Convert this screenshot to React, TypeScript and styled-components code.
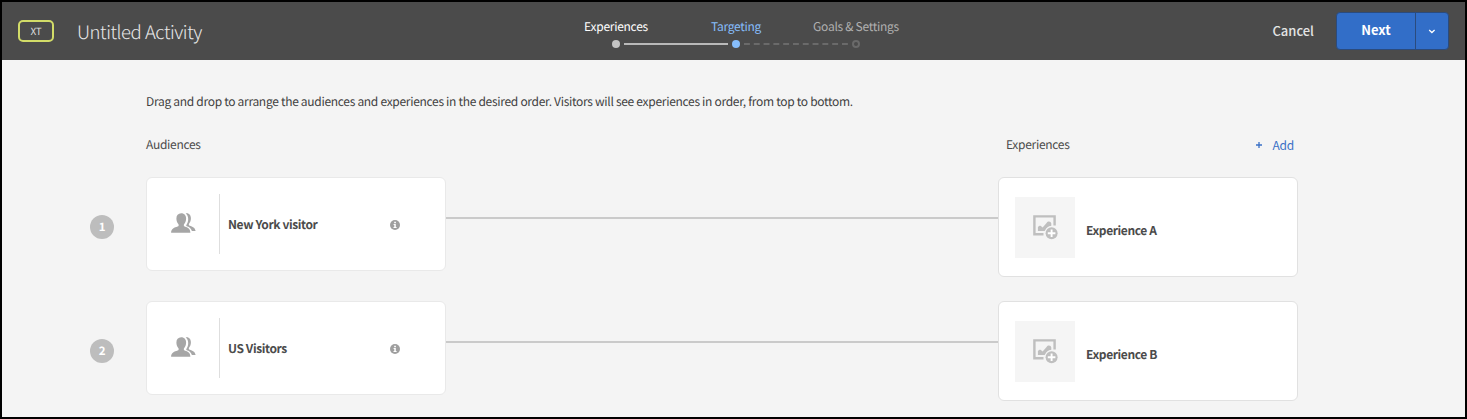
import React from "react";
import styled, { createGlobalStyle } from "styled-components";

const GlobalStyle = createGlobalStyle`
  *, *::before, *::after { box-sizing: border-box; }
  body {
    margin: 0;
    background: #f4f4f4;
    font-family: "Noto Sans CJK SC", "Noto Sans", sans-serif;
    color: #4b4b4b;
    font-size: 12px;
    line-height: 18px;
    letter-spacing: -0.3px;
    text-rendering: geometricPrecision;
  }
`;

const Frame = styled.div`
  width: 1467px;
  height: 419px;
  border: 2px solid #000;
  background: #f4f4f4;
  overflow: hidden;
`;

const Header = styled.header`
  display: flex;
  align-items: center;
  height: 58px;
  padding: 0 16px;
  background: #4b4b4b;
`;

const HeaderSide = styled.div<{ $end?: boolean }>`
  display: flex;
  align-items: center;
  justify-content: ${(p) => (p.$end ? "flex-end" : "flex-start")};
  width: ${(p) => (p.$end ? "auto" : "538px")};
  flex: ${(p) => (p.$end ? "1" : "none")};
`;

const TypeBadge = styled.span`
  width: 36px;
  height: 22px;
  border: 2px solid #d2dc68;
  border-radius: 5px;
  color: #dcdcdc;
  font-size: 10px;
  line-height: 17px;
  letter-spacing: -0.2px;
  text-align: center;
`;

const Title = styled.h1`
  margin: 1px 0 0 23px;
  color: #e8e8e8;
  font-size: 18.5px;
  font-weight: 300;
  line-height: 28px;
  letter-spacing: -0.45px;
  white-space: nowrap;
`;

const Steps = styled.ol`
  display: flex;
  margin: 4px 0 0;
  padding: 0;
  list-style: none;
`;

type StepState = "done" | "current" | "todo";
const labelColors = { done: "#ffffff", current: "#86bdfb", todo: "#b0b0b0" };
const dotColors = { done: "#c4c4c4", current: "#86bdfb", todo: "#4b4b4b" };

const Step = styled.li<{ $state: StepState }>`
  display: flex;
  flex-direction: column;
  align-items: center;
  width: 120px;
  color: ${(p) => labelColors[p.$state]};
  letter-spacing: -0.27px;
  white-space: nowrap;
`;

const StepTrack = styled.div`
  display: grid;
  grid-template-columns: 1fr 8px 1fr;
  align-items: center;
  column-gap: 4px;
  width: 100%;
  height: 8px;
  margin-top: 4px;
`;

const StepDot = styled.span<{ $state: StepState }>`
  height: 8px;
  border-radius: 50%;
  background: ${(p) => dotColors[p.$state]};
  border: ${(p) => (p.$state === "todo" ? "2px solid #6a6a6a" : "none")};
`;

const Segment = styled.span<{ $kind: "solid" | "dashed" | "none"; $side: "before" | "after" }>`
  height: 2px;
  background: ${(p) =>
    p.$kind === "solid"
      ? "#b9b9b9"
      : p.$kind === "dashed"
        ? "linear-gradient(90deg, #6a6a6a 0 6px, transparent 6px)"
        : "transparent"};
  background-size: 9.8px 2px;
  background-position-x: ${(p) => (p.$side === "before" ? "-3px" : "0")};
`;

const CancelButton = styled.button`
  margin: 0 22px 0 0;
  padding: 0 0 1px;
  border: 0;
  background: none;
  color: #e4e4e4;
  font: 500 13px/20px "Noto Sans CJK SC", "Noto Sans", sans-serif;
`;

const SplitButton = styled.div`
  display: flex;
  height: 38px;
  border: 1px solid #2b4b7d;
  border-radius: 4px;
  background: #326ec8;
  overflow: hidden;
`;

const NextButton = styled.button`
  width: 79px;
  padding: 0 0 2px;
  border: 0;
  border-right: 1px solid #2b4b7d;
  background: none;
  color: #fff;
  font: 700 13px/20px "Noto Sans CJK SC", "Noto Sans", sans-serif;
`;

const MoreButton = styled.button`
  display: flex;
  align-items: center;
  justify-content: center;
  width: 32px;
  padding: 1px 0 0;
  border: 0;
  background: none;
`;

const Main = styled.main`
  padding: 33px 0 0 88px;
`;

const Hint = styled.p`
  margin: 0 0 25px 56px;
  color: #3f3f3f;
`;

const Columns = styled.div`
  display: flex;
  justify-content: space-between;
  width: 1148px;
  margin: 0 0 23px 56px;
`;

const ExperienceHeading = styled.div`
  display: flex;
  justify-content: space-between;
  width: 288px;
`;

const AddLink = styled.button`
  display: flex;
  align-items: center;
  gap: 10px;
  height: 17px;
  padding: 0;
  border: 0;
  background: none;
  color: #3a70c6;
  font: inherit;
  letter-spacing: -0.2px;
`;

const Row = styled.div`
  display: flex;
  align-items: flex-start;
  height: 100px;
  margin-bottom: 24px;
`;

const Order = styled.span`
  width: 24px;
  height: 24px;
  margin: 38px 32px 0 0;
  border-radius: 50%;
  background: #bdbdbd;
  color: #fff;
  font-weight: 700;
  font-size: 11.5px;
  line-height: 24px;
  text-align: center;
`;

const Card = styled.div<{ $h: number; $edge: string }>`
  display: flex;
  width: 300px;
  height: ${(p) => p.$h}px;
  border: 1px solid ${(p) => p.$edge};
  border-radius: 6px;
  background: #fff;
`;

const AudienceIcon = styled.div`
  width: 73px;
  height: 60px;
  margin-top: 16px;
  padding: 19px 0 0 24px;
  border-right: 1px solid #dedede;
`;

const Name = styled.span<{ $w?: number; $top: number; $left: number }>`
  width: ${(p) => (p.$w ? `${p.$w}px` : "auto")};
  margin: ${(p) => `${p.$top}px 0 0 ${p.$left}px`};
  font-weight: 700;
  letter-spacing: -0.39px;
  white-space: nowrap;
`;

const InfoSlot = styled.span`
  display: flex;
  margin-top: 42px;
  height: 10px;
`;

const Connector = styled.div`
  width: 552px;
  height: 2px;
  margin-top: 40px;
  background: #cacaca;
`;

const Thumb = styled.div`
  width: 60px;
  height: 61px;
  margin: 19px 0 0 16px;
  padding: 18px 0 0 18px;
  background: #f5f5f5;
`;

const PeopleIcon = () => (
  <svg width="25" height="21" viewBox="0 0 25 21" fill="#a6a6a6" display="block">
    <path d="M10.2.3c3.100 0 4.900 2.100 4.900 5.100 0 2.600-.9 4.200-1.900 5.500-.7 1-.5 2.200.6 2.600 3.100 1.100 5.600 2.200 5.600 6.300H.1c0-4.200 3.300-5.200 6.500-6.300 1.200-.4 1.400-1.600.7-2.600-1-1.300-1.900-2.900-1.900-5.500 0-3 1.700-5.100 4.800-5.100z" />
    <path d="M14.700.4c3.400-.7 5.200 1.900 5.200 5 0 2.400-.9 3.800-1.700 5-.7.9-.4 2 .5 2.300 2.800 1 5.500 1.700 5.900 5.400h-3.700c-.8-3-3-4.100-5.100-4.800-.7-.3-.7-.9-.3-1.500 1-1.500 1.700-3.500 1.700-5.800 0-2.300-.9-4.600-2.500-5.600z" />
  </svg>
);

const InfoIcon = () => (
  <svg width="10" height="10" viewBox="0 0 10 10" display="block">
    <circle cx="5" cy="5" r="5" fill="#9f9f9f" />
    <path d="M4.200 1.700h1.700v1.500H4.200zM3.600 4.100h2.200v3h.8v1H3.500v-1h.8V5.100h-.7z" fill="#fff" />
  </svg>
);

const AddImageIcon = () => (
  <svg width="25" height="25" viewBox="0 0 25 25" display="block">
    <path d="M10.500 19.200H1.400V1.400h20.200v9.200" fill="none" stroke="#bfbfbf" strokeWidth="2.400" />
    <path d="M4.900 15.900v-3.700c.8-1.300 2-1.900 3-1.100l1.700 1.500 4-4.700c.6-.9 1.400-1.400 2.400-1.400 1.200 0 2.100.8 2.300 1.900v2.300c-3 .5-5.200 2.500-5.900 5.200z" fill="#bfbfbf" />
    <circle cx="18.600" cy="18.300" r="7.200" fill="#f5f5f5" />
    <circle cx="18.600" cy="18.300" r="6" fill="#bfbfbf" />
    <path d="M18.600 14.500v7.600M14.800 18.300h7.600" stroke="#fff" strokeWidth="1.900" />
  </svg>
);

const steps: {
  label: string;
  state: StepState;
  before: "solid" | "dashed" | "none";
  after: "solid" | "dashed" | "none";
}[] = [
  { label: "Experiences", state: "done", before: "none", after: "solid" },
  { label: "Targeting", state: "current", before: "solid", after: "dashed" },
  { label: "Goals & Settings", state: "todo", before: "dashed", after: "none" },
];

const rows = [
  { audience: "New York visitor", experience: "Experience A" },
  { audience: "US Visitors", experience: "Experience B" },
];

export default function App() {
  return (
    <>
      <GlobalStyle />
      <Frame>
        <Header>
          <HeaderSide>
            <TypeBadge>XT</TypeBadge>
            <Title>Untitled Activity</Title>
          </HeaderSide>
          <Steps>
            {steps.map((s) => (
              <Step key={s.label} $state={s.state}>
                {s.label}
                <StepTrack>
                  <Segment $kind={s.before} $side="before" />
                  <StepDot $state={s.state} />
                  <Segment $kind={s.after} $side="after" />
                </StepTrack>
              </Step>
            ))}
          </Steps>
          <HeaderSide $end>
            <CancelButton>Cancel</CancelButton>
            <SplitButton>
              <NextButton>Next</NextButton>
              <MoreButton aria-label="More actions">
                <svg width="8" height="5" viewBox="0 0 8 5">
                  <path d="M1.200 1l2.700 2.500L6.600 1" fill="none" stroke="#fff" strokeWidth="1.300" />
                </svg>
              </MoreButton>
            </SplitButton>
          </HeaderSide>
        </Header>
        <Main>
          <Hint>
            Drag and drop to arrange the audiences and experiences in the desired order. Visitors
            will see experiences in order, from top to bottom.
          </Hint>
          <Columns>
            <span>Audiences</span>
            <ExperienceHeading>
              <span>Experiences</span>
              <AddLink>
                <svg width="6" height="6" viewBox="0 0 6 6">
                  <path d="M3 0v6M0 3h6" stroke="#3a70c6" strokeWidth="1.300" />
                </svg>
                Add
              </AddLink>
            </ExperienceHeading>
          </Columns>
          {rows.map((r, i) => (
            <Row key={r.audience}>
              <Order>{i + 1}</Order>
              <Card $h={94} $edge="#e9e9e9">
                <AudienceIcon>
                  <PeopleIcon />
                </AudienceIcon>
                <Name $w={162} $top={38} $left={8}>
                  {r.audience}
                </Name>
                <InfoSlot>
                  <InfoIcon />
                </InfoSlot>
              </Card>
              <Connector />
              <Card $h={100} $edge="#e1e1e1">
                <Thumb>
                  <AddImageIcon />
                </Thumb>
                <Name $top={44} $left={11}>
                  {r.experience}
                </Name>
              </Card>
            </Row>
          ))}
        </Main>
      </Frame>
    </>
  );
}
